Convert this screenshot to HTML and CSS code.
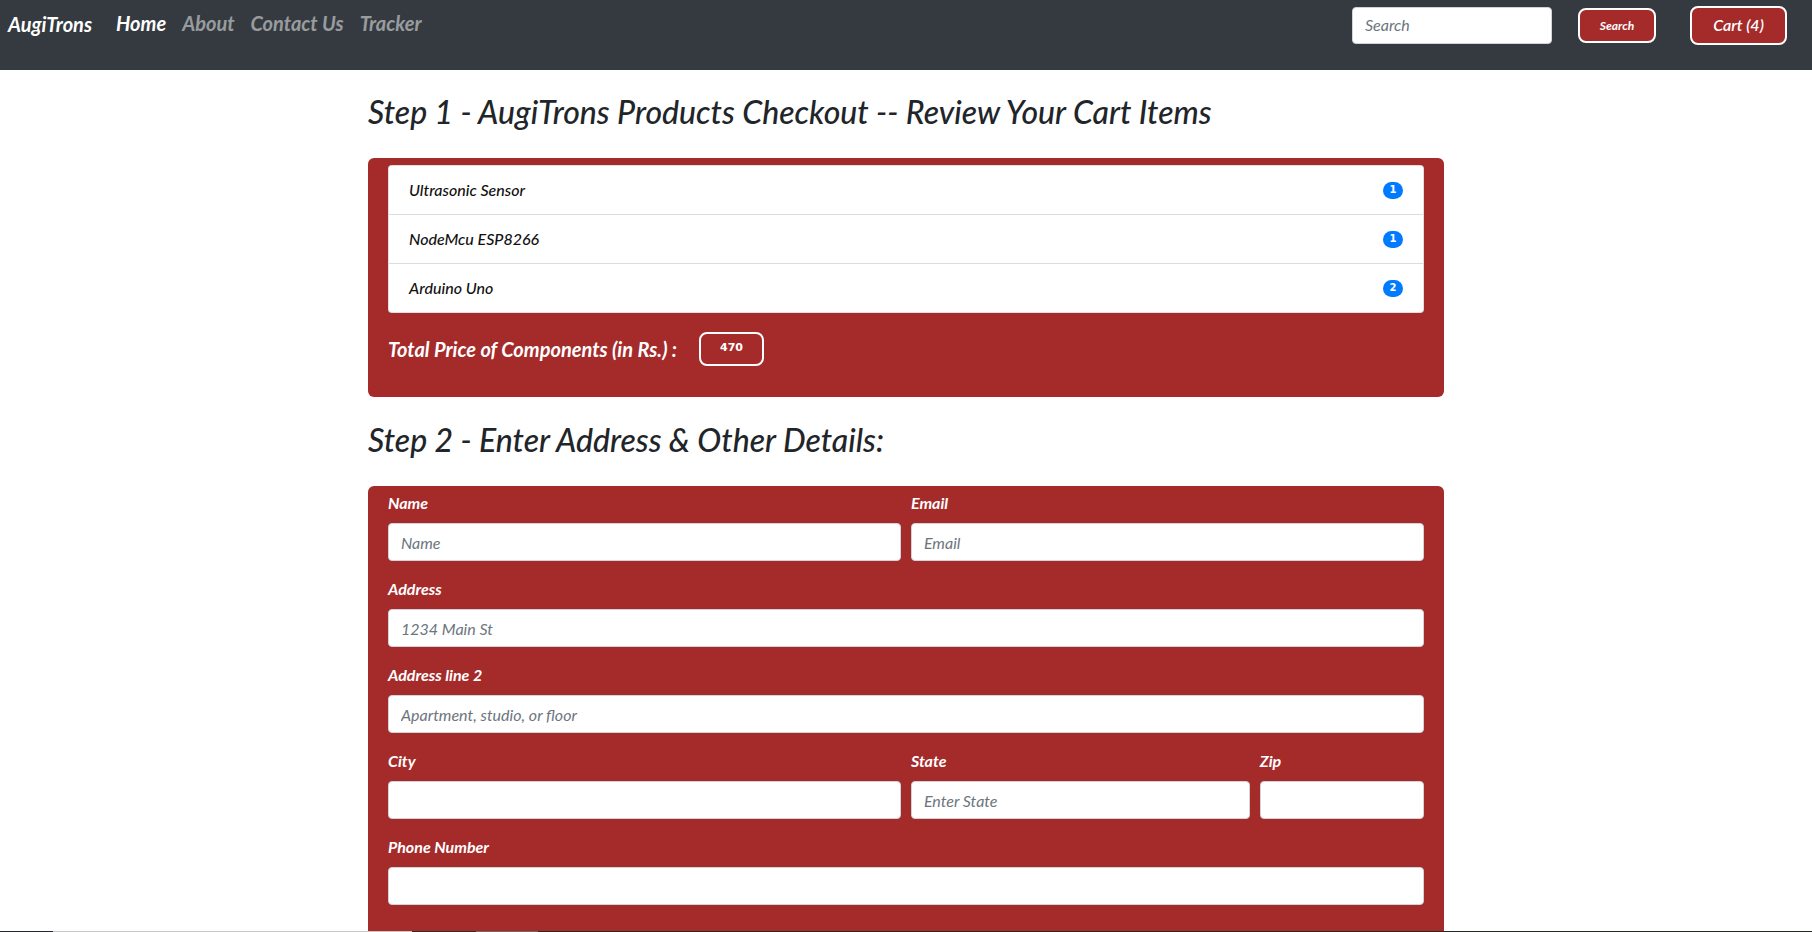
FILE: index.html
```html
<!DOCTYPE html>
<html lang="en">
<head>
<meta charset="utf-8">
<title>AugiTrons Checkout</title>
<link rel="stylesheet" href="styles.css">
</head>
<body>
<nav class="navbar">
  <a class="brand" href="#">AugiTrons</a>
  <ul class="nav-links">
    <li><a class="nav-link active" href="#">Home</a></li>
    <li><a class="nav-link" href="#">About</a></li>
    <li><a class="nav-link" href="#">Contact Us</a></li>
    <li><a class="nav-link" href="#">Tracker</a></li>
  </ul>
  <form class="search-form">
    <input class="search-input" type="search" placeholder="Search">
    <button class="btn-outline btn-search" type="button">Search</button>
  </form>
  <button class="btn-outline btn-cart" type="button">Cart (4)</button>
</nav>

<main class="container">
  <h2 class="step-title">Step 1 - AugiTrons Products Checkout -- Review Your Cart Items</h2>
  <section class="panel panel-cart">
    <ul class="list-group">
      <li class="list-item"><span>Ultrasonic Sensor</span><span class="badge">1</span></li>
      <li class="list-item"><span>NodeMcu ESP8266</span><span class="badge">1</span></li>
      <li class="list-item"><span>Arduino Uno</span><span class="badge">2</span></li>
    </ul>
    <div class="total-row">
      <span class="total-label">Total Price of Components (in Rs.) :</span>
      <span class="total-box">470</span>
    </div>
  </section>

  <h2 class="step-title step-two">Step 2 - Enter Address &amp; Other Details:</h2>
  <form class="panel panel-form">
    <div class="form-row">
      <div class="form-group col-6">
        <label>Name</label>
        <input class="form-control" type="text" placeholder="Name">
      </div>
      <div class="form-group col-6">
        <label>Email</label>
        <input class="form-control" type="email" placeholder="Email">
      </div>
    </div>
    <div class="form-group">
      <label>Address</label>
      <input class="form-control" type="text" placeholder="1234 Main St">
    </div>
    <div class="form-group">
      <label>Address line 2</label>
      <input class="form-control" type="text" placeholder="Apartment, studio, or floor">
    </div>
    <div class="form-row">
      <div class="form-group col-6">
        <label>City</label>
        <input class="form-control" type="text">
      </div>
      <div class="form-group col-4">
        <label>State</label>
        <input class="form-control" type="text" placeholder="Enter State">
      </div>
      <div class="form-group col-2">
        <label>Zip</label>
        <input class="form-control" type="text">
      </div>
    </div>
    <div class="form-group">
      <label>Phone Number</label>
      <input class="form-control" type="tel">
    </div>
  </form>
</main>
<div class="bottom-strip"></div>
</body>
</html>
```

FILE: styles.css
```css
* { box-sizing: border-box; }

html, body {
  margin: 0;
  padding: 0;
}

body {
  font-family: "Lato", "Open Sans", sans-serif;
  font-style: italic;
  color: #212529;
  background: #fff;
  font-size: 16px;
  line-height: 1.5;
}

/* ---------- Navbar ---------- */
.navbar {
  height: 70px;
  background: #343a40;
  display: flex;
  align-items: center;
  padding: 0 25px 20px 8px;
}

.brand {
  color: #fff;
  font-weight: 700;
  font-size: 20px;
  line-height: 28px;
  text-decoration: none;
  margin-right: 24px;
  margin-top: -2px;
}

.nav-links {
  list-style: none;
  margin: -2px 0 0;
  padding: 0;
  display: flex;
  gap: 16px;
  line-height: 28px;
}

.nav-link {
  color: rgba(255, 255, 255, 0.5);
  font-weight: 700;
  font-size: 20px;
  text-decoration: none;
}

.nav-link.active { color: #fff; }

.search-form {
  margin-left: auto;
  display: flex;
  align-items: center;
}

.search-input {
  width: 200px;
  height: 37px;
  border: 1px solid #ced4da;
  border-radius: 4px;
  padding: 5px 12px 7px;
  font-family: inherit;
  font-style: italic;
  font-size: 16px;
  color: #495057;
  outline: none;
}

.search-input::placeholder { color: #6c757d; }

.btn-outline {
  background: #a52a2a;
  color: #fff;
  border: 2px solid #fff;
  border-radius: 8px;
  font-family: inherit;
  font-style: italic;
  font-weight: 700;
  cursor: pointer;
  padding: 0;
}

.btn-search {
  margin-left: 26px;
  width: 78px;
  height: 35px;
  font-size: 12px;
}

.btn-cart {
  margin-left: 34px;
  width: 97px;
  height: 39px;
  font-size: 16px;
  font-weight: 600;
  padding-bottom: 2px;
}

/* ---------- Content ---------- */
.container {
  width: 1076px;
  margin: 0 auto;
  padding-top: 23px;
}

.step-title {
  margin: 0 0 27px;
  font-size: 32px;
  line-height: 38px;
  font-weight: 500;
  font-style: italic;
  color: #212529;
}

.step-two { margin-bottom: 27px; }

.panel {
  background: #a52a2a;
  border-radius: 6px;
}

.panel-cart {
  padding: 7px 20px 31px;
  margin-bottom: 24px;
}

.list-group {
  list-style: none;
  margin: 0;
  padding: 0;
  background: #fff;
  border-radius: 4px;
  border: 1px solid rgba(0, 0, 0, 0.125);
}

.list-item {
  display: flex;
  justify-content: space-between;
  align-items: center;
  padding: 12px 20px;
  line-height: 24px;
  font-size: 16px;
  font-weight: 500;
  color: #111;
  border-bottom: 1px solid #dcdcdc;
}

.list-item:last-child { border-bottom: none; }

.badge {
  display: inline-flex;
  align-items: center;
  justify-content: center;
  min-width: 20px;
  height: 17px;
  padding: 0 5px;
  border-radius: 10px;
  background: #007bff;
  color: #fff;
  font-family: "DejaVu Sans", sans-serif;
  font-style: normal;
  font-weight: 700;
  font-size: 10px;
  line-height: 1;
}

.total-row {
  margin-top: 19px;
  height: 34px;
  display: flex;
  align-items: center;
}

.total-label {
  color: #fff;
  font-weight: 700;
  font-size: 20px;
}

.total-box {
  margin-left: 22px;
  width: 65px;
  height: 34px;
  border: 2px solid #fff;
  border-radius: 8px;
  display: flex;
  align-items: center;
  justify-content: center;
  color: #fff;
  font-family: "DejaVu Sans", sans-serif;
  font-style: normal;
  font-weight: 700;
  font-size: 11px;
  padding-bottom: 2px;
}

.panel-form {
  padding: 5px 20px 40px;
  border-bottom-left-radius: 0;
  border-bottom-right-radius: 0;
}

.form-row {
  display: flex;
  margin: 0 -5px;
}

.form-row > .form-group { padding: 0 5px; }

.col-6 { flex: 0 0 50%; }
.col-4 { flex: 0 0 33.3333%; }
.col-2 { flex: 0 0 16.6667%; }

.form-group { margin-bottom: 16px; }

.form-group label {
  display: block;
  margin-bottom: 8px;
  line-height: 24px;
  color: #fff;
  font-weight: 700;
  font-size: 16px;
}

.form-control {
  display: block;
  width: 100%;
  height: 38px;
  border: 1px solid #ced4da;
  border-radius: 4px;
  padding: 6px 12px;
  background: #fff;
  font-family: inherit;
  font-style: italic;
  font-size: 16px;
  color: #495057;
  outline: none;
}

.form-control::placeholder { color: #6c757d; }

.bottom-strip {
  position: fixed;
  left: 0;
  right: 0;
  bottom: 0;
  height: 1px;
  background: linear-gradient(to right,
    #23262a 0 53px,
    #c8c8c8 53px 412px,
    #2a2d30 412px 476px,
    #6a6a6a 476px 538px,
    #252a24 538px 100%);
}
```
